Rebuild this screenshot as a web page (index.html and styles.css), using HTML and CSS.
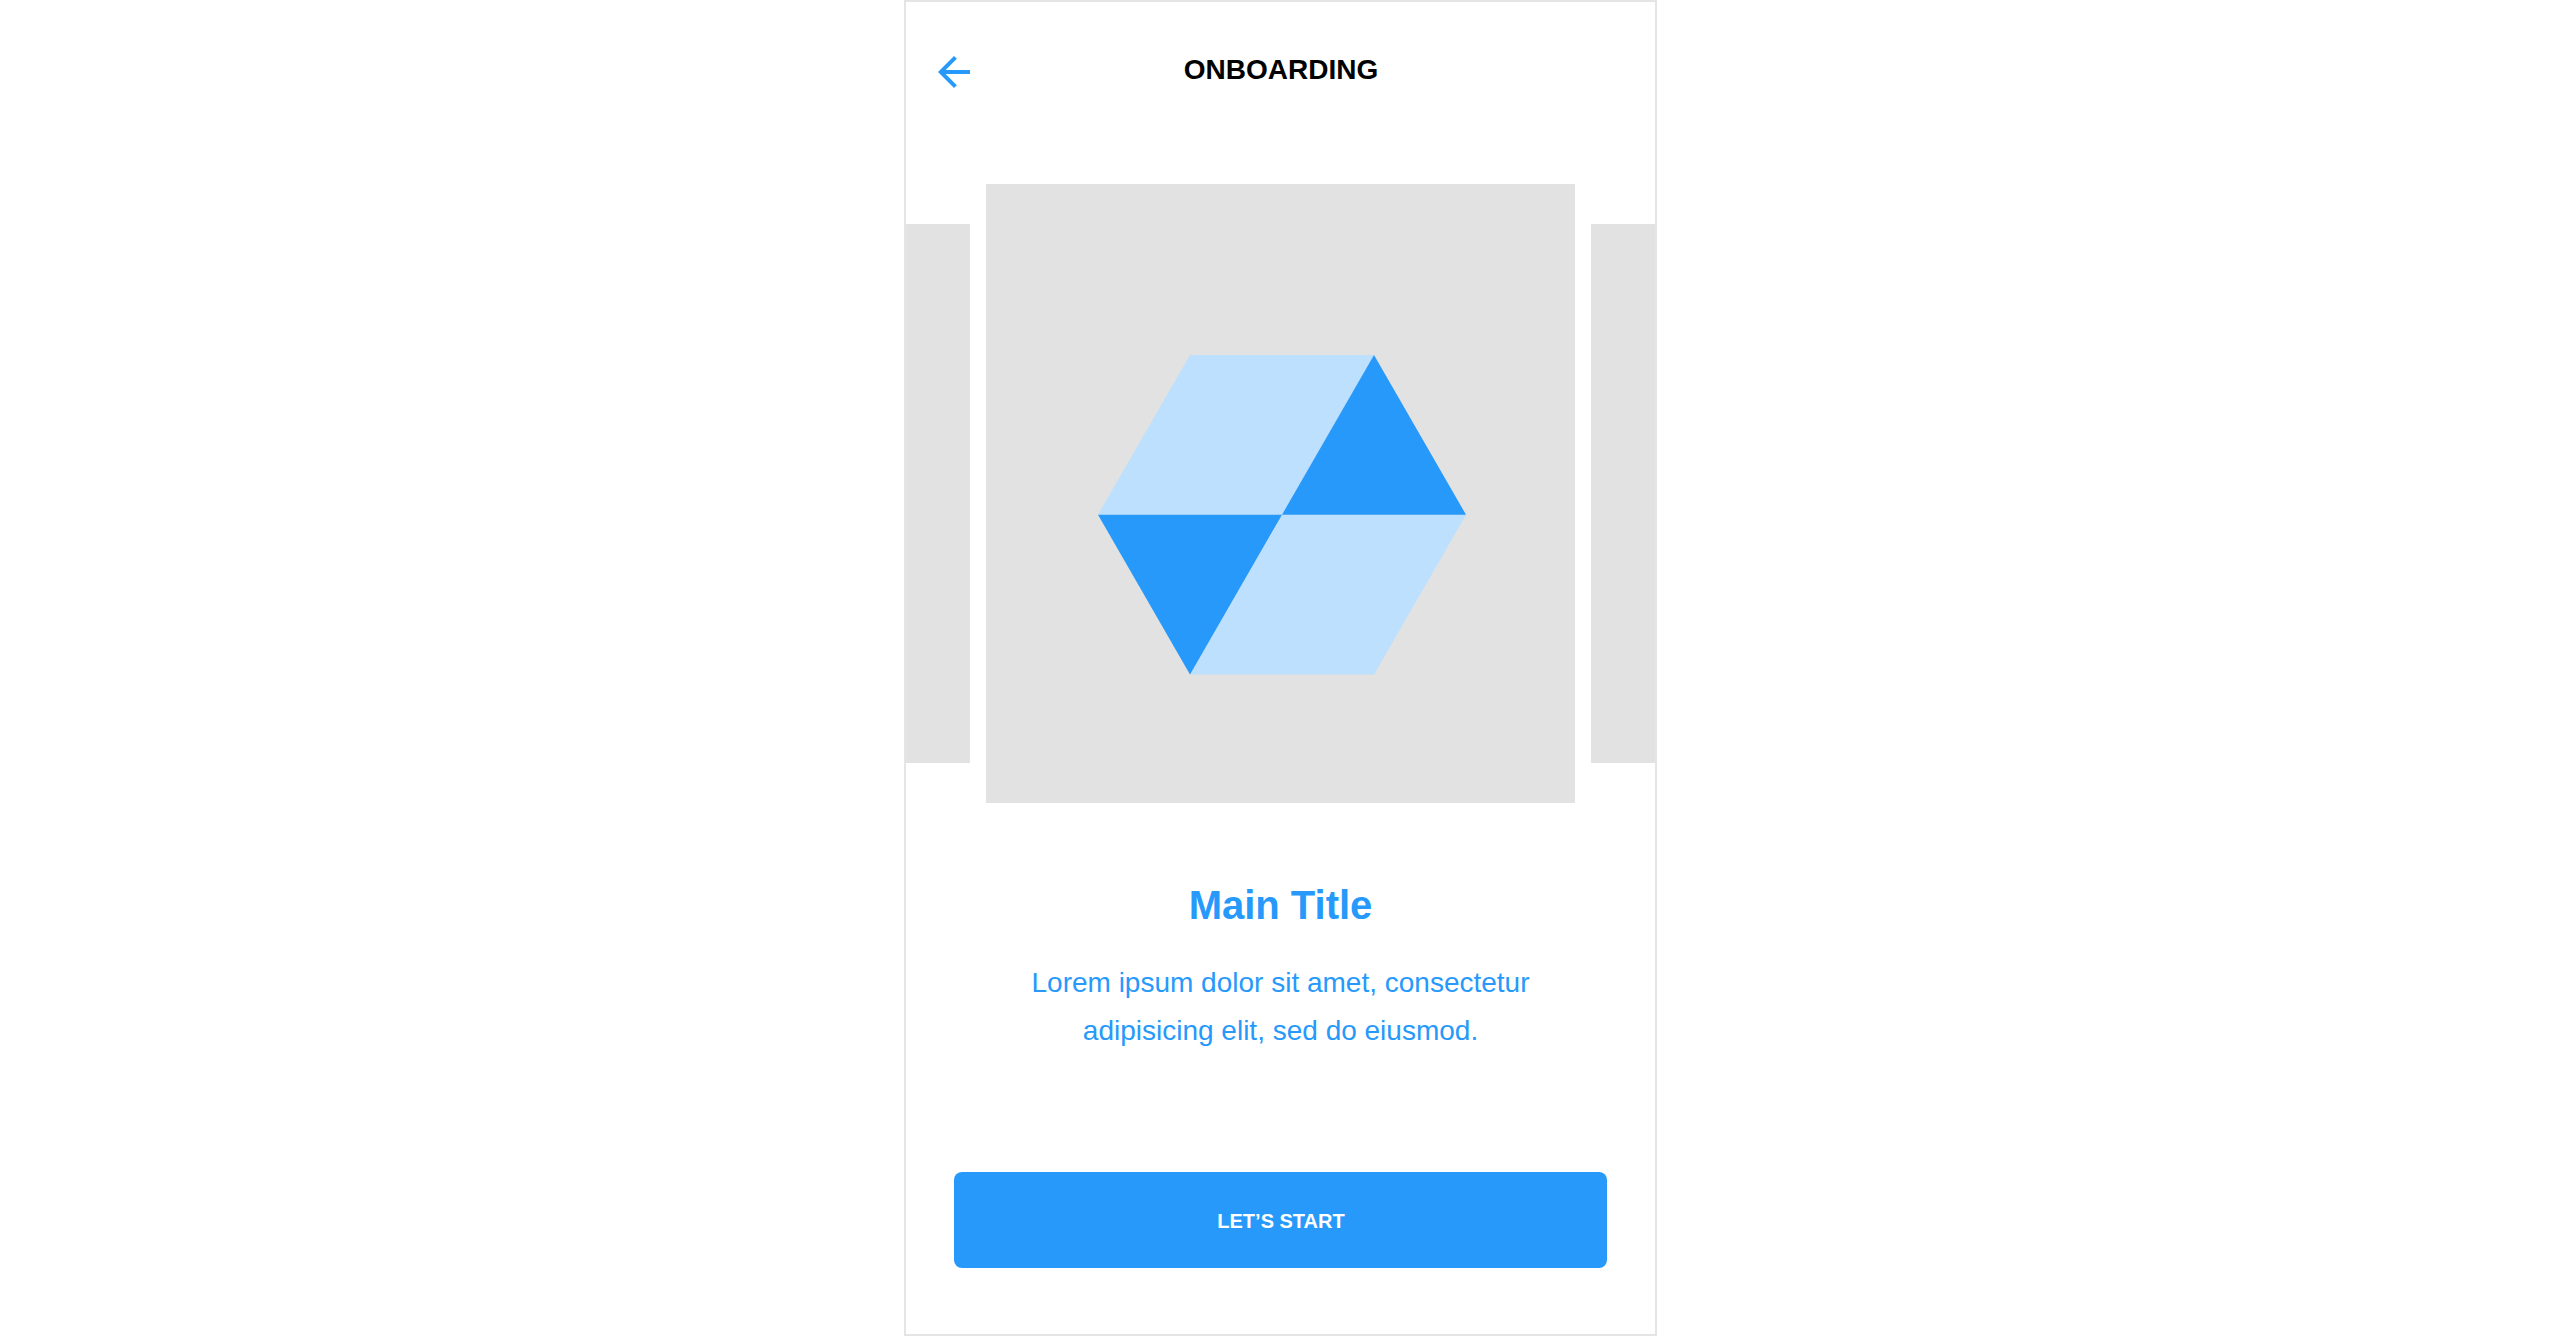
FILE: index.html
```html
<!DOCTYPE html>
<html lang="en">
<head>
  <meta charset="utf-8">
  <meta name="viewport" content="width=device-width, initial-scale=1">
  <title>Onboarding</title>
  <link rel="stylesheet" href="styles.css">
</head>
<body>
  <main class="screen">
    <header class="topbar">
      <button class="back" type="button" aria-label="Back">
        <svg class="back-icon" viewBox="4 4 16 16" aria-hidden="true">
          <path d="M20 11H7.83l5.59-5.59L12 4l-8 8 8 8 1.41-1.41L7.83 13H20v-2z"/>
        </svg>
      </button>
      <h1 class="topbar-title">ONBOARDING</h1>
    </header>

    <section class="carousel" aria-label="Slides">
      <div class="slide-peek"></div>
      <div class="slide">
        <svg class="logo" viewBox="0 0 371 320" aria-hidden="true">
          <path class="logo-light" d="M95 0H279L187 159.7H3z"/>
          <path class="logo-light" d="M187 159.7H371L279 319.4H95z"/>
          <path class="logo-dark" d="M279 0L371 159.7H187z"/>
          <path class="logo-dark" d="M3 159.7H187L95 319.4z"/>
        </svg>
      </div>
      <div class="slide-peek"></div>
    </section>

    <section class="intro">
      <h2 class="intro-title">Main Title</h2>
      <p class="intro-text">Lorem ipsum dolor sit amet, consectetur adipisicing elit, sed do eiusmod.</p>
    </section>

    <button class="start" type="button">LET’S START</button>
  </main>
</body>
</html>
```
FILE: styles.css
```css
* {
  box-sizing: border-box;
}

body {
  margin: 0;
  background: #fff;
  font-family: "Liberation Sans", Arial, sans-serif;
}

.screen {
  display: flex;
  flex-direction: column;
  max-width: 753px;
  min-height: 100vh;
  margin: 0 auto;
  padding-bottom: 66px;
  border: 2px solid #e5e5e5;
}

.topbar {
  display: grid;
  grid-template-columns: 32px 1fr 30px;
  align-items: start;
  padding: 54px 32px 96px;
}

.back {
  display: block;
  width: 32px;
  height: 32px;
  padding: 0;
  border: 0;
  background: none;
  cursor: pointer;
}

.back-icon {
  display: block;
  width: 32px;
  height: 32px;
  fill: #2699fb;
}

.topbar-title {
  margin: 0;
  font-size: 28px;
  line-height: 28px;
  text-align: center;
  color: #000;
}

.carousel {
  display: flex;
  gap: 16px;
}

.slide-peek {
  flex: 0 0 64px;
  margin: 40px 0;
  background: #e2e2e2;
}

.slide {
  display: flex;
  flex: 1;
  align-items: center;
  justify-content: center;
  aspect-ratio: 589 / 619;
  padding-top: 43px;
  background: #e2e2e2;
}

.logo {
  display: block;
  width: 371px;
  max-width: 63%;
}

.logo-light {
  fill: #bce0fd;
}

.logo-dark {
  fill: #2699fb;
}

.intro {
  padding: 78px 95px 48px 96px;
  text-align: center;
  color: #2699fb;
}

.intro-title {
  margin: 0 0 30px;
  font-size: 40px;
  line-height: 48px;
}

.intro-text {
  margin: 0;
  font-size: 28px;
  line-height: 48px;
}

.start {
  height: 96px;
  margin: auto 48px 0;
  padding: 2px 0 0 2px;
  border: 0;
  border-radius: 8px;
  background: #2699fb;
  color: #fff;
  font: bold 20px/24px "Liberation Sans", Arial, sans-serif;
  cursor: pointer;
}
```
